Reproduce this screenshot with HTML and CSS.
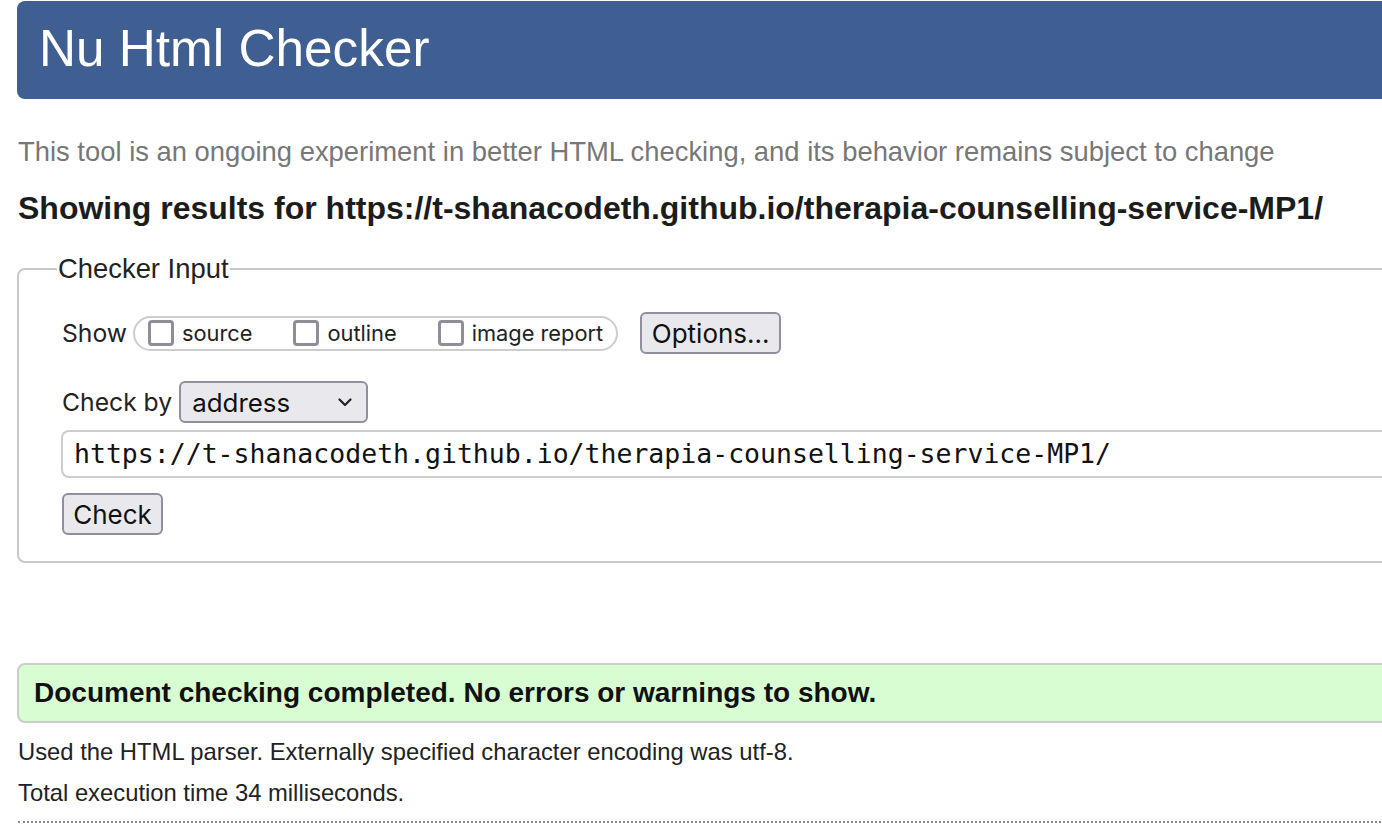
FILE: index.html
```html
<!DOCTYPE html>
<html lang="en">
<head>
<meta charset="utf-8">
<title>Nu Html Checker</title>
<link rel="stylesheet" href="styles.css">
</head>
<body>
<div class="page">
  <header class="masthead">
    <h1 class="title">Nu Html Checker</h1>
  </header>
  <p class="intro">This tool is an ongoing experiment in better HTML checking, and its behavior remains subject to change</p>
  <h2 class="results-for">Showing results for https://t-shanacodeth.github.io/therapia-counselling-service-MP1/</h2>

  <fieldset class="input-box">
    <legend class="input-legend">Checker Input</legend>
    <div class="row show-row">
      <span class="row-label">Show</span>
      <div class="pill">
        <label class="opt"><span class="cb"></span><span class="opt-text">source</span></label>
        <label class="opt"><span class="cb"></span><span class="opt-text">outline</span></label>
        <label class="opt opt-last"><span class="cb"></span><span class="opt-text">image report</span></label>
      </div>
      <span class="btn btn-options">Options...</span>
    </div>
    <div class="row by-row">
      <span class="row-label">Check by</span>
      <span class="select">
        <span class="select-text">address</span>
        <svg class="chev" width="14" height="9" viewBox="0 0 14 9"><polyline points="1.5,1.5 7,7 12.5,1.5" fill="none" stroke="#222" stroke-width="2.2" stroke-linecap="round" stroke-linejoin="round"/></svg>
      </span>
    </div>
    <div class="url-field">https://t-shanacodeth.github.io/therapia-counselling-service-MP1/</div>
    <div class="row check-row">
      <span class="btn btn-check">Check</span>
    </div>
  </fieldset>

  <div class="success">Document checking completed. No errors or warnings to show.</div>
  <p class="meta">Used the HTML parser. Externally specified character encoding was utf-8.</p>
  <p class="meta meta-2">Total execution time 34 milliseconds.</p>
  <hr class="dotted">
</div>
</body>
</html>
```

FILE: styles.css
```css
html, body {
  margin: 0;
  padding: 0;
  overflow: hidden;
  background: #fff;
}

body {
  font-family: "Liberation Sans", Arial, Helvetica, sans-serif;
  color: #222;
  font-size: 24px;
}

.page {
  width: 1460px;
  padding-left: 17px;
  padding-top: 1px;
}

.masthead {
  height: 98px;
  background: #3f5e92;
  border-radius: 8px;
  display: flex;
  align-items: center;
}

.title {
  margin: 0;
  padding: 0 0 3px 22px;
  font-weight: normal;
  font-size: 51.3px;
  line-height: 1;
  color: #fff;
}

.intro {
  margin: 37px 0 0 1px;
  line-height: 32px;
  color: #777;
  font-size: 27.4px;
}

.results-for {
  margin: 21px 0 0 1px;
  font-size: 32px;
  line-height: 38px;
  font-weight: bold;
  color: #1c1c1c;
}

.input-box {
  margin: 26px 0 0 0;
  padding: 26px 0 26px 43px;
  border: 2px solid #c9c9c9;
  border-radius: 8px;
  font-family: Inter, "Liberation Sans", sans-serif;
  min-width: 0;
}

.input-legend {
  font-family: "Liberation Sans", Arial, sans-serif;
  font-size: 27.4px;
  line-height: 32px;
  padding: 0 1px;
  margin-left: -5px;
  color: #222;
}

.row {
  display: flex;
  align-items: center;
}

.row-label {
  font-size: 24.7px;
  color: #222;
}

.show-row {
  height: 42px;
  margin-top: 1px;
}

.pill {
  display: flex;
  align-items: center;
  height: 31px;
  margin-left: 6px;
  padding: 0 13px 0 13px;
  border: 2px solid #cdcdcd;
  border-radius: 18px;
}

.opt {
  display: flex;
  align-items: center;
  margin-right: 41px;
}

.opt-last {
  margin-right: 0;
}

.cb {
  width: 20px;
  height: 20px;
  border: 3px solid #8e8e99;
  border-radius: 4px;
  background: #fff;
}

.opt-text {
  margin-left: 8px;
  font-size: 21.8px;
  color: #222;
}

.btn {
  display: inline-flex;
  align-items: center;
  justify-content: center;
  box-sizing: border-box;
  height: 42px;
  background: #e9e9ed;
  border: 2px solid #8f8f9d;
  border-radius: 6px;
  font-size: 26px;
  color: #111;
}

.btn-options {
  width: 141px;
  margin-left: 22px;
}

.by-row {
  margin-top: 27px;
}

.select {
  display: inline-flex;
  align-items: center;
  justify-content: space-between;
  box-sizing: border-box;
  width: 189px;
  height: 42px;
  margin-left: 7px;
  padding: 0 14px 0 11px;
  background: #e9e9ed;
  border: 2px solid #8f8f9d;
  border-radius: 6px;
}

.select-text {
  font-size: 25.9px;
  color: #111;
}

.chev {
  display: block;
}

.url-field {
  margin-top: 7px;
  margin-left: -1px;
  height: 44px;
  line-height: 44px;
  border: 2px solid #cdcdcd;
  border-right: none;
  border-radius: 8px 0 0 8px;
  padding-left: 11px;
  font-family: "DejaVu Sans Mono", "Liberation Mono", monospace;
  font-size: 26.5px;
  color: #111;
  white-space: nowrap;
}

.check-row {
  margin-top: 15px;
}

.btn-check {
  width: 101px;
}

.success {
  margin-top: 100px;
  box-sizing: border-box;
  height: 60px;
  line-height: 56px;
  padding-left: 15px;
  background: #d9fdd3;
  border: 2px solid #cccccc;
  border-radius: 8px;
  font-weight: bold;
  font-size: 28px;
  color: #111;
}

.meta {
  margin: 14px 0 0 1px;
  line-height: 30px;
  font-size: 23.8px;
  color: #222;
}

.meta-2 {
  margin-top: 11px;
}

.dotted {
  margin: 13px 0 0 1px;
  height: 0;
  border: none;
  border-top: 2px dotted #888;
}
```
